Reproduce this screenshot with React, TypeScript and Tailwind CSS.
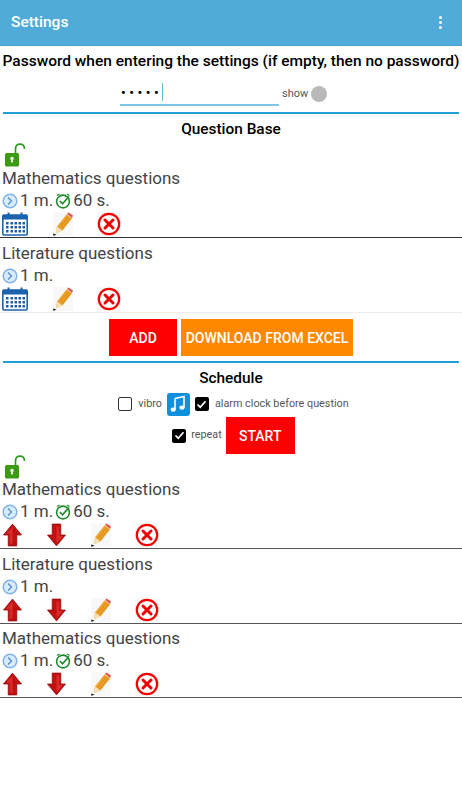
import React from 'react';

const ClockIcon = () => (
  <svg width="16" height="18" viewBox="0 0 16 18" className="shrink-0">
    <circle cx="8" cy="9" r="6.8" fill="#dcebf9" stroke="#7db4ea" strokeWidth="1.5" />
    <path d="M6 5.5 L9.5 9 L6 12.5" fill="none" stroke="#4a90d9" strokeWidth="1.3" />
  </svg>
);

const TimerIcon = () => (
  <svg width="16" height="16" viewBox="0 0 16 16" className="shrink-0">
    <circle cx="8" cy="8.5" r="6.4" fill="#fff" stroke="#1f8a2c" strokeWidth="1.6" />
    <path d="M4.8 8 L7.5 10.8 L14 3.5" fill="none" stroke="#1f8a2c" strokeWidth="1.7" />
    <path d="M2 2.5 L4.5 1 M12 1 L14.5 2.5" stroke="#1f8a2c" strokeWidth="1.2" />
  </svg>
);

const LockIcon = () => (
  <svg width="22" height="24" viewBox="0 0 22 24">
    <path d="M11.5 11 V6 C11.5 3 13.5 1.2 16 1.2 C18.5 1.2 20.5 3 20.5 6" fill="none" stroke="#2f9e1f" strokeWidth="1.7" />
    <rect x="1" y="10" width="14" height="13.5" rx="1.5" fill="#3c9a12" />
    <circle cx="8" cy="15.5" r="1.8" fill="#e8f5e0" />
    <rect x="7" y="15.5" width="2" height="4" fill="#e8f5e0" />
  </svg>
);

const CalendarIcon = () => (
  <svg width="26" height="24" viewBox="0 0 26 24">
    <rect x="0.8" y="3" width="24.4" height="20" rx="1.2" fill="#fff" stroke="#1c62ad" strokeWidth="1.6" />
    <rect x="0.8" y="3" width="24.4" height="4.5" fill="#1c62ad" />
    <rect x="5.5" y="0.5" width="2" height="5" fill="#1c62ad" />
    <rect x="18.5" y="0.5" width="2" height="5" fill="#1c62ad" />
    {[10, 14, 18].map(y =>
      [4, 8.5, 12.5, 16.5, 20.5].map(x => (
        <rect key={`${x}-${y}`} x={x} y={y} width="2.5" height="2.5" fill="#1c5aa5" />
      ))
    )}
  </svg>
);

const PencilIcon = () => (
  <svg width="20" height="24" viewBox="0 0 20 24">
    <path d="M4 14.5 L13.5 2.5 L19 6.5 L9.5 18.5 L3 21 Z" fill="#eda126" />
    <path d="M7 15.5 L15.5 4.5 M9 17 L17.5 6" stroke="#d68a1c" strokeWidth="0.9" />
    <path d="M14 2 L15.5 0.5 L20 3.5 L19 6 Z" fill="#e2574c" />
    <path d="M4 14.5 L9.5 18.5 L3 21 Z" fill="#f6e2b6" />
    <path d="M0 21.5 L3.5 22.5 L0.5 24 Z" fill="#222" />
  </svg>
);

const DeleteIcon = () => (
  <svg width="24" height="24" viewBox="0 0 24 24">
    <circle cx="12" cy="12" r="10.2" fill="#fff" stroke="#f40000" strokeWidth="2.2" />
    <path d="M8 8 L16 16 M16 8 L8 16" stroke="#ee0000" strokeWidth="3" strokeLinecap="round" />
  </svg>
);

const ArrowIcon = ({ down }: { down?: boolean }) => (
  <svg width="19" height="24" viewBox="0 0 20 24" className={down ? 'rotate-180' : ''}>
    <path d="M10 0.5 L19.5 12 H14.5 V23.5 H5.5 V12 H0.5 Z" fill="#c01010" stroke="#8f0a0a" strokeWidth="0.8" />
    <path d="M10 3 L3 11 H7 V21 H10 Z" fill="#d92a2a" />
  </svg>
);

const NoteIcon = () => (
  <div className="w-[23px] h-[23px] rounded-[3px] bg-[#0f8fdc] flex items-center justify-center">
    <svg width="16" height="18" viewBox="0 0 16 18">
      <path d="M5 3.5 L14 1.5 V12.5" fill="none" stroke="#fff" strokeWidth="1.6" />
      <path d="M5 3.5 V14.5" fill="none" stroke="#fff" strokeWidth="1.6" />
      <ellipse cx="3.2" cy="14.6" rx="2.6" ry="2.2" fill="#fff" />
      <ellipse cx="12" cy="12.6" rx="2.6" ry="2.2" fill="#fff" />
    </svg>
  </div>
);

const Check = ({ checked }: { checked?: boolean }) => (
  <div className={`w-[14px] h-[14px] rounded-[2px] flex items-center justify-center ${checked ? 'bg-black' : 'bg-white border-[1.5px] border-[#333]'}`}>
    {checked && (
      <svg width="11" height="11" viewBox="0 0 11 11">
        <path d="M1.5 5.5 L4.2 8.2 L9.5 2.2" fill="none" stroke="#fff" strokeWidth="1.7" />
      </svg>
    )}
  </div>
);

const TimeRow = ({ seconds }: { seconds?: boolean }) => (
  <div className="flex items-center h-[21px] text-[17px] text-[#444]">
    <ClockIcon />
    <span className="ml-[2px]">1 m.</span>
    {seconds && (
      <>
        <span className="ml-[2px]"><TimerIcon /></span>
        <span className="ml-[2px]">60 s.</span>
      </>
    )}
  </div>
);

const BaseItem = ({ title, seconds, line }: { title: string; seconds?: boolean; line: string }) => (
  <div className={`pl-[2px] pt-[4px] border-b ${line}`}>
    <div className="text-[17px] leading-[23px] text-[#444]">{title}</div>
    <TimeRow seconds={seconds} />
    <div className="flex items-center h-[26px]">
      <CalendarIcon />
      <div className="ml-[25px] bg-[#f8f8f8] h-[24px]"><PencilIcon /></div>
      <div className="ml-[24px] bg-[#f8f8f8] h-[24px]"><DeleteIcon /></div>
    </div>
  </div>
);

const ScheduleItem = ({ title, seconds, compact }: { title: string; seconds?: boolean; compact?: boolean }) => (
  <div className={`pl-[2px] border-b border-[#555] ${compact ? 'pt-[3px]' : 'pt-[4px]'}`}>
    <div className="text-[17px] leading-[23px] text-[#444]">{title}</div>
    <TimeRow seconds={seconds} />
    <div className="flex items-center h-[26px]">
      <div className="ml-px"><ArrowIcon /></div>
      <div className="ml-[25px]"><ArrowIcon down /></div>
      <div className="ml-[25px] bg-[#f8f8f8] h-[24px]"><PencilIcon /></div>
      <div className="ml-[24px] bg-[#f8f8f8] h-[24px]"><DeleteIcon /></div>
    </div>
  </div>
);

export default function App() {
  return (
    <div className="w-[462px] h-[800px] bg-white overflow-hidden font-['Roboto',sans-serif]">
      {/* Header */}
      <div className="h-[46px] bg-[#50abd9] flex items-center justify-between pl-[11px] pr-[20px] border-b border-[#45a3d3]">
        <span className="text-white text-[15.5px] font-medium">Settings</span>
        <div className="flex flex-col gap-[2px]">
          <div className="w-[3px] h-[3px] rounded-full bg-white" />
          <div className="w-[3px] h-[3px] rounded-full bg-white" />
          <div className="w-[3px] h-[3px] rounded-full bg-white" />
        </div>
      </div>

      {/* Password */}
      <div className="text-center text-[15.5px] leading-[20px] font-medium text-black mt-[5px] whitespace-nowrap">
        Password when entering the settings (if empty, then no password)
      </div>
      <div className="flex items-end h-[35px] pl-[120px]">
        <div className="w-[159px] h-[26px] border-b-2 border-[#82c4e4] flex items-center pl-[1px]">
          <span className="text-[13px] font-bold tracking-[3.6px] text-black leading-none">•••••</span>
          <div className="w-px h-[18px] bg-[#5bb5d5]" />
        </div>
        <span className="ml-[3px] text-[11px] leading-[16px] text-[#555] mb-[4px]">show</span>
        <div className="ml-[3px] w-[16px] h-[16px] rounded-full bg-[#b9b9b9] mb-[4px]" />
      </div>
      <div className="mx-[3px] mt-[6px] h-[2px] bg-[#1f9fd6]" />

      {/* Question Base */}
      <div className="text-center text-[15.4px] font-medium leading-[20px] mt-[5px] text-black">Question Base</div>
      <div className="pl-[4px] mt-[4px] h-[20px]"><LockIcon /></div>
      <BaseItem title="Mathematics questions" seconds line="border-[#333]" />
      <BaseItem title="Literature questions" line="border-[#eeeeee]" />

      <div className="flex justify-center gap-[4px] mt-[6px]">
        <button className="w-[68px] h-[37px] pt-px bg-[#ff0000] text-white text-[14px] font-medium">ADD</button>
        <button className="w-[172px] h-[37px] pt-px bg-[#ff8800] text-white text-[14px] font-medium whitespace-nowrap">DOWNLOAD FROM EXCEL</button>
      </div>
      <div className="mx-[3px] mt-[5px] h-[2px] bg-[#1f9fd6]" />

      {/* Schedule */}
      <div className="text-center text-[15.4px] font-medium leading-[20px] mt-[5px] text-black">Schedule</div>
      <div className="flex justify-center items-center mt-[4px] h-[24px] pl-[5px]">
        <Check />
        <span className="ml-[6px] text-[10.8px] text-[#555]">vibro</span>
        <div className="ml-[5px]"><NoteIcon /></div>
        <div className="ml-[5px]"><Check checked /></div>
        <span className="ml-[6px] text-[10.8px] text-[#555]">alarm clock before question</span>
      </div>
      <div className="flex justify-center items-center mt-[1px] h-[37px] pl-[5px]">
        <Check checked />
        <span className="ml-[5px] text-[10.8px] text-[#555]">repeat</span>
        <button className="ml-[4px] w-[69px] h-[37px] pt-px bg-[#ff0000] text-white text-[14px] font-medium">START</button>
      </div>

      <div className="pl-[4px] mt-[1px] h-[19px]"><LockIcon /></div>
      <ScheduleItem title="Mathematics questions" seconds />
      <ScheduleItem title="Literature questions" />
      <ScheduleItem title="Mathematics questions" seconds compact />
    </div>
  );
}
